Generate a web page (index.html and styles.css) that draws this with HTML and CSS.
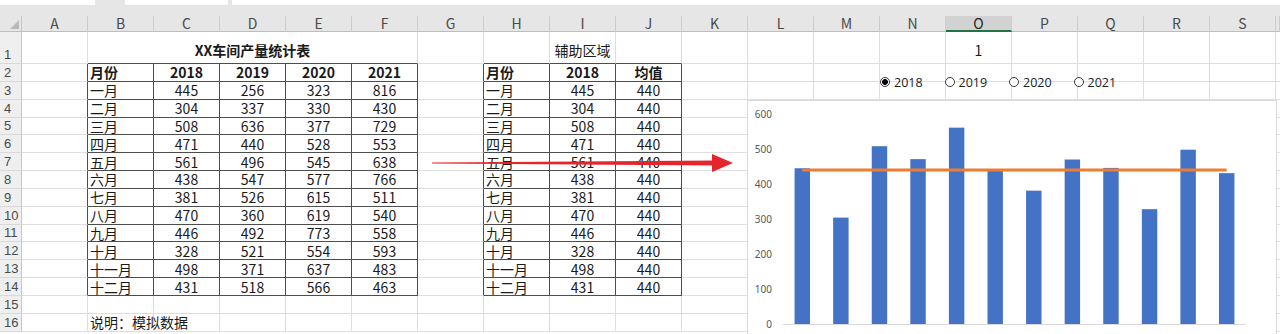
FILE: index.html
```html
<!DOCTYPE html>
<html lang="zh-CN">
<head>
    <meta charset="UTF-8">
    <meta name="viewport" content="width=device-width, initial-scale=1.0">
    <title>XX车间产量统计表</title>
    <link rel="stylesheet" href="styles.css">
</head>
<body>
    <div class="app">
        <div class="formula-strip">
            <div class="name-box"></div>
            <div class="fx-box"></div>
            <div class="formula-box"></div>
        </div>

        <div class="sheet" id="sheet"></div>

        <!-- option buttons linked to O1 -->
        <div class="radio-group" id="radios">
            <label class="radio"><input type="radio" name="year" value="0" checked>2018</label>
            <label class="radio"><input type="radio" name="year" value="1">2019</label>
            <label class="radio"><input type="radio" name="year" value="2">2020</label>
            <label class="radio"><input type="radio" name="year" value="3">2021</label>
        </div>

        <svg class="arrow" width="306" height="26" viewBox="0 0 306 26">
            <polygon points="2,12.4 285,10.6 285,15.4 2,13.6" fill="#e4262c"/>
            <polygon points="282,4 303,13 282,22" fill="#e4262c"/>
        </svg>

        <div class="chart">
            <svg id="chartSvg" width="528" height="258"></svg>
        </div>
    </div>

    <script>
        const letters = 'ABCDEFGHIJKLMNOPQRS'.split('');
        const years = [2018, 2019, 2020, 2021];
        const months = ['一月', '二月', '三月', '四月', '五月', '六月', '七月', '八月', '九月', '十月', '十一月', '十二月'];
        const data = [
            [445, 256, 323, 816],
            [304, 337, 330, 430],
            [508, 636, 377, 729],
            [471, 440, 528, 553],
            [561, 496, 545, 638],
            [438, 547, 577, 766],
            [381, 526, 615, 511],
            [470, 360, 619, 540],
            [446, 492, 773, 558],
            [328, 521, 554, 593],
            [498, 371, 637, 483],
            [431, 518, 566, 463]
        ];

        const sheet = document.getElementById('sheet');
        const chartSvg = document.getElementById('chartSvg');
        const cells = {};

        // bordered ranges B2:F14 and H2:J14
        function inBox(r, c) {
            return r >= 2 && r <= 14 && ((c >= 1 && c <= 5) || (c >= 7 && c <= 9));
        }

        function addCell(cls, text) {
            const div = document.createElement('div');
            div.className = cls;
            if (text !== undefined) div.textContent = text;
            sheet.appendChild(div);
            return div;
        }

        function set(ref, text, extra) {
            const el = cells[ref];
            el.textContent = text;
            if (extra) el.classList.add(...extra.split(' '));
        }

        // Build the grid
        addCell('corner');
        letters.forEach(l => addCell('col-head' + (l === 'O' ? ' active' : ''), l));
        addCell('col-head');

        for (let r = 1; r <= 16; r++) {
            addCell('row-head', r);
            for (let c = 0; c < letters.length; c++) {
                const ref = letters[c] + r;
                const span = ref === 'B1' ? 5 : 1;
                let cls = 'cell';
                if (r === 1) cls += ' top';
                if (span > 1) cls += ' span5';
                if (inBox(r, c + span - 1) || inBox(r, c + span)) cls += ' br';
                if (inBox(r, c) || inBox(r + 1, c)) cls += ' bb';
                cells[ref] = addCell(cls);
                c += span - 1;
            }
            addCell('cell');
        }

        // Static content
        set('B1', 'XX车间产量统计表', 'title');
        set('I1', '辅助区域', 'mid');
        set('O1', '1', 'mid');
        set('B2', '月份', 'bold');
        years.forEach((y, i) => set(letters[2 + i] + '2', y, 'bold mid'));
        set('H2', '月份', 'bold');
        set('I2', '', 'bold mid');
        set('J2', '均值', 'bold mid');

        months.forEach((m, i) => {
            const r = i + 3;
            set('B' + r, m);
            data[i].forEach((v, j) => set(letters[2 + j] + r, v, 'mid'));
            set('H' + r, m);
            set('I' + r, '', 'mid');
            set('J' + r, '', 'mid');
        });

        set('B16', '说明：模拟数据');

        // Chart
        function drawChart(values, avg) {
            const max = Math.ceil(Math.max(...values) * 1.05 / 100) * 100;
            const base = 223, h = 210, left = 35, width = 463;
            const step = width / 12;
            const barW = step / 2.5;
            const y = v => base - v / max * h;
            let out = '';

            for (let t = 0; t <= max; t += 100) {
                out += `<text class="tick" x="24" y="${y(t)}">${t}</text>`;
            }
            out += `<line class="axis" x1="${left}" y1="${base + 0.5}" x2="${left + width}" y2="${base + 0.5}"/>`;

            values.forEach((v, i) => {
                const x = left + step * (i + 0.5) - barW / 2;
                out += `<rect class="bar" x="${x}" y="${y(v)}" width="${barW}" height="${base - y(v)}"/>`;
            });

            out += `<line class="avg" x1="${left + step / 2}" y1="${y(avg)}" x2="${left + step * 11.5}" y2="${y(avg)}"/>`;
            chartSvg.innerHTML = out;
        }

        // Update helper area when the option changes
        function update(sel) {
            const values = data.map(row => row[sel]);
            const avg = Math.round(values.reduce((a, b) => a + b, 0) / values.length);

            cells['O1'].textContent = sel + 1;
            cells['I2'].textContent = years[sel];
            values.forEach((v, i) => {
                cells['I' + (i + 3)].textContent = v;
                cells['J' + (i + 3)].textContent = avg;
            });
            drawChart(values, avg);
        }

        document.querySelectorAll('#radios input').forEach(input => {
            input.addEventListener('change', () => update(Number(input.value)));
        });

        update(0);
    </script>
</body>
</html>
```

FILE: styles.css
```css
* {
    margin: 0;
    padding: 0;
    box-sizing: border-box;
}

body {
    font-family: "Noto Sans CJK SC", "Noto Sans", sans-serif;
    background: #fff;
    overflow: hidden;
}

.app {
    position: relative;
    width: 1280px;
    height: 334px;
    overflow: hidden;
}

/* bottom edge of the formula bar */
.formula-strip {
    height: 16px;
    background: #e6e6e6;
    display: flex;
    align-items: flex-start;
}

.formula-strip div {
    height: 5px;
    background: #fff;
}

.name-box {
    width: 95px;
}

.fx-box {
    width: 103px;
    margin-left: 30px;
}

.formula-box {
    flex: 1;
    margin-left: 4px;
}

/* grid */
.sheet {
    display: grid;
    grid-template-columns: 22px repeat(19, 66px) 4px;
    grid-template-rows: 16px 32px repeat(16, 17.85px);
    font-size: 14px;
    color: #1a1a1a;
}

.corner {
    position: relative;
    background: #e6e6e6;
    border-right: 1px solid #c6c6c6;
    border-bottom: 1px solid #bdbdbd;
}

.corner::after {
    content: "";
    position: absolute;
    right: 2px;
    bottom: 2px;
    width: 9px;
    height: 9px;
    background: #b9b9b9;
    clip-path: polygon(100% 0, 100% 100%, 0 100%);
}

.col-head {
    display: flex;
    align-items: center;
    justify-content: center;
    background: #e6e6e6;
    border-right: 1px solid #cdcdcd;
    border-bottom: 1px solid #bdbdbd;
    color: #4a4a4a;
    font-size: 14px;
    line-height: 15px;
}

.col-head.active {
    background: #d2d2d2;
    border-bottom: 2px solid #217346;
    color: #262626;
}

.row-head {
    display: flex;
    align-items: flex-end;
    padding: 0 0 1px 4px;
    background: #efefef;
    border-right: 1px solid #c6c6c6;
    border-bottom: 1px solid #d9d9d9;
    color: #4a4a4a;
    font-family: "Liberation Sans Narrow", "Liberation Sans", sans-serif;
    font-size: 13px;
    line-height: 15px;
}

.cell {
    display: flex;
    align-items: center;
    min-width: 0;
    padding: 0 2px;
    border-right: 1px solid #dedede;
    border-bottom: 1px solid #dedede;
    line-height: 16px;
    white-space: nowrap;
}

.cell.top {
    align-items: flex-end;
    padding-bottom: 5px;
}

.cell.span5 {
    grid-column: span 5;
}

.cell.br {
    border-right-color: #4d4d4d;
}

.cell.bb {
    border-bottom-color: #4d4d4d;
}

.cell.mid {
    justify-content: center;
}

.cell.bold {
    font-weight: bold;
}

.cell.title {
    justify-content: center;
    font-weight: bold;
}

/* floating option buttons */
.radio-group {
    position: absolute;
    left: 880px;
    top: 74px;
    display: flex;
}

.radio {
    width: 64.5px;
    height: 16px;
    display: flex;
    align-items: center;
    gap: 4px;
    font-family: "Open Sans", sans-serif;
    font-size: 12.5px;
    color: #222;
    cursor: pointer;
}

.radio input {
    appearance: none;
    flex: none;
    width: 10px;
    height: 10px;
    margin: 0;
    border: 1px solid #3a3a3a;
    border-radius: 50%;
    background: #fff;
    cursor: pointer;
}

.radio input:checked {
    background: radial-gradient(circle, #000 0 2.6px, #fff 3.2px);
}

.arrow {
    position: absolute;
    left: 430px;
    top: 150px;
}

.chart {
    position: absolute;
    left: 747px;
    top: 100px;
    width: 530px;
    height: 260px;
    background: #fff;
    border: 1px solid #d9d9d9;
}

.chart svg {
    display: block;
}

.tick {
    font-family: "Noto Sans", sans-serif;
    font-size: 10px;
    fill: #595959;
    text-anchor: end;
    dominant-baseline: central;
}

.axis {
    stroke: #d9d9d9;
    stroke-width: 1;
}

.bar {
    fill: #4472c4;
}

.avg {
    stroke: #ed7d31;
    stroke-width: 3;
}
```
